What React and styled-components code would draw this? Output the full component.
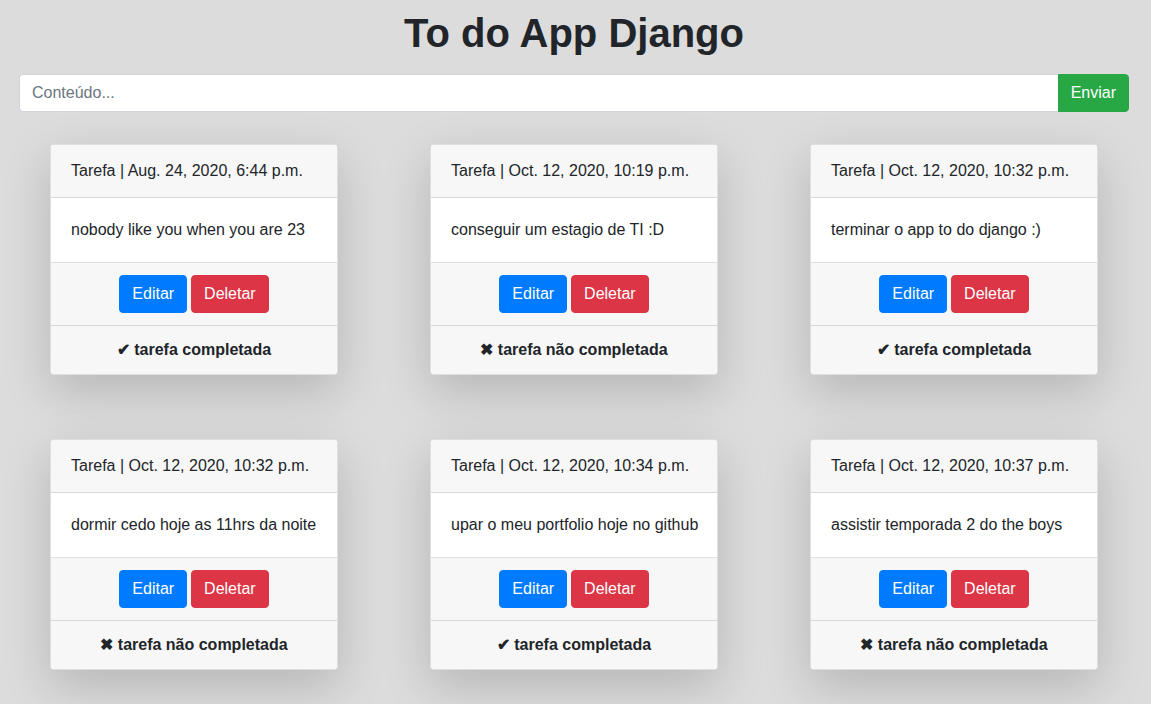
import React from "react";
import styled, { createGlobalStyle } from "styled-components";

const Global = createGlobalStyle`
  html, body { margin: 0; padding: 0; }
  body {
    background: #dcdcdc;
    font-family: "Liberation Sans", Arial, sans-serif;
    font-size: 16px;
    line-height: 1.5;
    color: #212529;
  }
  * { box-sizing: border-box; }
`;

const Page = styled.div`
  padding: 9px 22px 40px 19px;
`;

const Title = styled.h1`
  margin: 0 0 17px;
  text-align: center;
  font-size: 40px;
  font-weight: 700;
  line-height: 1.2;
  color: #212529;
`;

const Form = styled.form`
  display: flex;
  margin: 0 0 32px;
`;

const Input = styled.input`
  flex: 1;
  height: 38px;
  padding: 6px 12px;
  font-family: inherit;
  font-size: 16px;
  color: #495057;
  background: #fff;
  border: 1px solid #ced4da;
  border-right: none;
  border-radius: 4px 0 0 4px;
  outline: none;
  &::placeholder { color: #6c757d; }
`;

const Button = styled.button`
  height: 38px;
  padding: 6px 12px;
  font-family: inherit;
  font-size: 16px;
  line-height: 24px;
  color: #fff;
  border: 1px solid ${(p) => p.$bg};
  background: ${(p) => p.$bg};
  border-radius: ${(p) => (p.$joined ? "0 4px 4px 0" : "4px")};
  cursor: pointer;
`;

const Grid = styled.div`
  display: grid;
  grid-template-columns: repeat(3, 380px);
  justify-content: center;
  row-gap: 64px;
  margin: 0 -15px;
`;

const Card = styled.div`
  width: 288px;
  justify-self: center;
  background: #fff;
  border: 1px solid rgba(0, 0, 0, 0.125);
  border-radius: 4px;
  box-shadow: 0 16px 48px rgba(0, 0, 0, 0.175);
  overflow: hidden;
`;

const Header = styled.div`
  padding: 14px 20px;
  background: #f7f7f7;
  border-bottom: 1px solid rgba(0, 0, 0, 0.125);
  white-space: nowrap;
`;

const Body = styled.div`
  padding: 20px;
  border-bottom: 1px solid rgba(0, 0, 0, 0.125);
  white-space: nowrap;
`;

const Actions = styled.div`
  display: flex;
  justify-content: center;
  gap: 4px;
  padding: 12px 20px;
  background: #f7f7f7;
  border-bottom: 1px solid rgba(0, 0, 0, 0.125);
`;

const Status = styled.div`
  padding: 12px 20px;
  text-align: center;
  font-weight: 700;
  background: #f7f7f7;
`;

const tasks = [
  { date: "Aug. 24, 2020, 6:44 p.m.", text: "nobody like you when you are 23", done: true },
  { date: "Oct. 12, 2020, 10:19 p.m.", text: "conseguir um estagio de TI :D", done: false },
  { date: "Oct. 12, 2020, 10:32 p.m.", text: "terminar o app to do django :)", done: true },
  { date: "Oct. 12, 2020, 10:32 p.m.", text: "dormir cedo hoje as 11hrs da noite", done: false },
  { date: "Oct. 12, 2020, 10:34 p.m.", text: "upar o meu portfolio hoje no github", done: true },
  { date: "Oct. 12, 2020, 10:37 p.m.", text: "assistir temporada 2 do the boys", done: false },
];

export default function App() {
  return (
    <>
      <Global />
      <Page>
        <Title>To do App Django</Title>
        <Form onSubmit={(e) => e.preventDefault()}>
          <Input placeholder="Conteúdo..." />
          <Button $bg="#28a745" $joined type="submit">Enviar</Button>
        </Form>
        <Grid>
          {tasks.map((t, i) => (
            <Card key={i}>
              <Header>Tarefa | {t.date}</Header>
              <Body>{t.text}</Body>
              <Actions>
                <Button $bg="#007bff">Editar</Button>
                <Button $bg="#dc3545">Deletar</Button>
              </Actions>
              <Status>{t.done ? "✔ tarefa completada" : "✖ tarefa não completada"}</Status>
            </Card>
          ))}
        </Grid>
      </Page>
    </>
  );
}
